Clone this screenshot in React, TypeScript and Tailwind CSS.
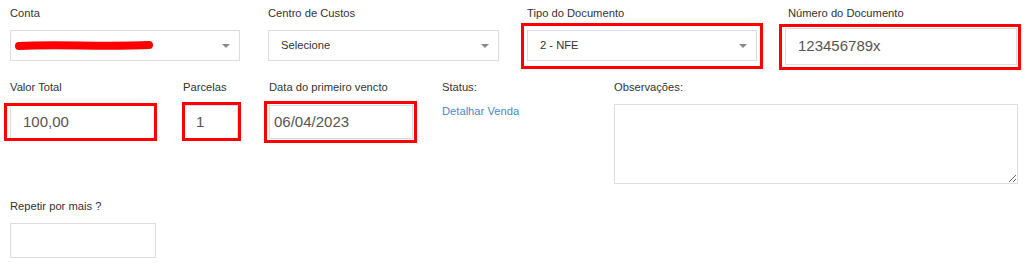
import React from 'react';

const font = { fontFamily: '"Liberation Sans", Arial, sans-serif' };

function Caret() {
  return (
    <svg width="8" height="4" viewBox="0 0 8 4" className="shrink-0">
      <path d="M0 0 L8 0 L4 4 Z" fill="#8a8a8a" />
    </svg>
  );
}

function Label({ children, className = '' }: { children: React.ReactNode; className?: string }) {
  return <div className={`text-[11.2px] leading-[16px] text-[#333] ${className}`}>{children}</div>;
}

function SelectBox({ children }: { children?: React.ReactNode }) {
  return (
    <div className="h-[31px] border border-[#dcdde3] bg-white flex items-center justify-between pl-[12px] pr-[9px]">
      <div className="text-[11.2px] text-[#333]">{children}</div>
      <Caret />
    </div>
  );
}

function TextBox({ value, h = 'h-[34px]', pl = 'pl-[12px]' }: { value?: string; h?: string; pl?: string }) {
  return (
    <div className={`${h} ${pl} border border-[#dcdde3] bg-white flex items-center text-[15px] text-[#555]`}>
      {value}
    </div>
  );
}

// red annotation frame drawn over a field
function Marked({ children, frame }: { children: React.ReactNode; frame: string }) {
  return (
    <div className="relative">
      {children}
      <div className={`absolute border-[3px] border-[#ff0000] pointer-events-none ${frame}`} />
    </div>
  );
}

export default function App() {
  return (
    <main className="w-[1024px] h-[263px] bg-white overflow-hidden" style={font}>
      {/* Row 1 */}
      <section className="grid grid-cols-[230px_231px_230px_232px] gap-x-[28px] pl-[10px] pt-[5px]">
        <div>
          <Label>Conta</Label>
          <div className="mt-[9px]">
            <div className="h-[31px] border border-[#dcdde3] bg-white flex items-center justify-between pl-[4px] pr-[9px]">
              <svg width="140" height="12" viewBox="0 0 140 12">
                <path d="M4 6 C40 4, 90 7, 134 5" stroke="#ff0000" strokeWidth="8" strokeLinecap="round" fill="none" />
              </svg>
              <Caret />
            </div>
          </div>
        </div>
        <div>
          <Label>Centro de Custos</Label>
          <div className="mt-[9px]">
            <SelectBox>Selecione</SelectBox>
          </div>
        </div>
        <div>
          <Label>Tipo do Documento</Label>
          <div className="mt-[9px]">
            <Marked frame="-left-[6px] -right-[6px] -top-[7px] -bottom-[8px]">
              <SelectBox>2 - NFE</SelectBox>
            </Marked>
          </div>
        </div>
        <div>
          <Label className="pl-[3px]">Número do Documento</Label>
          <div className="mt-[7px]">
            <Marked frame="-left-[6px] -right-[4px] -top-[4px] -bottom-[5px]">
              <TextBox value="123456789x" h="h-[37px]" />
            </Marked>
          </div>
        </div>
      </section>

      {/* Row 2 */}
      <section className="grid grid-cols-[173px_86px_173px_172px_404px] pl-[10px] mt-[14px]">
        <div className="pr-[28px]">
          <Label>Valor Total</Label>
          <div className="mt-[10px]">
            <Marked frame="-left-[6px] -right-[2px] -top-[2px] -bottom-[2px]">
              <TextBox value="100,00" />
            </Marked>
          </div>
        </div>
        <div className="pr-[31px]">
          <Label>Parcelas</Label>
          <div className="mt-[10px]">
            <Marked frame="-left-[1px] -right-[3px] -top-[3px] -bottom-[2px]">
              <TextBox value="1" pl="pl-[12px]" />
            </Marked>
          </div>
        </div>
        <div className="pr-[29px]">
          <Label>Data do primeiro vencto</Label>
          <div className="mt-[10px]">
            <Marked frame="-left-[5px] -right-[4px] -top-[4px] -bottom-[4px]">
              <TextBox value="06/04/2023" pl="pl-[4px]" />
            </Marked>
          </div>
        </div>
        <div>
          <Label>Status:</Label>
          <a className="block mt-[8px] text-[11.2px] text-[#4a8ac9]">Detalhar Venda</a>
        </div>
        <div>
          <Label>Observações:</Label>
          <textarea
            className="mt-[9px] block w-[404px] h-[80px] border border-[#dcdde3] bg-white outline-none"
            style={font}
          />
        </div>
      </section>

      {/* Row 3 */}
      <section className="pl-[10px] mt-[14px]">
        <Label>Repetir por mais ?</Label>
        <div className="mt-[9px] w-[146px] h-[35px] border border-[#dcdde3] bg-white" />
      </section>
    </main>
  );
}
